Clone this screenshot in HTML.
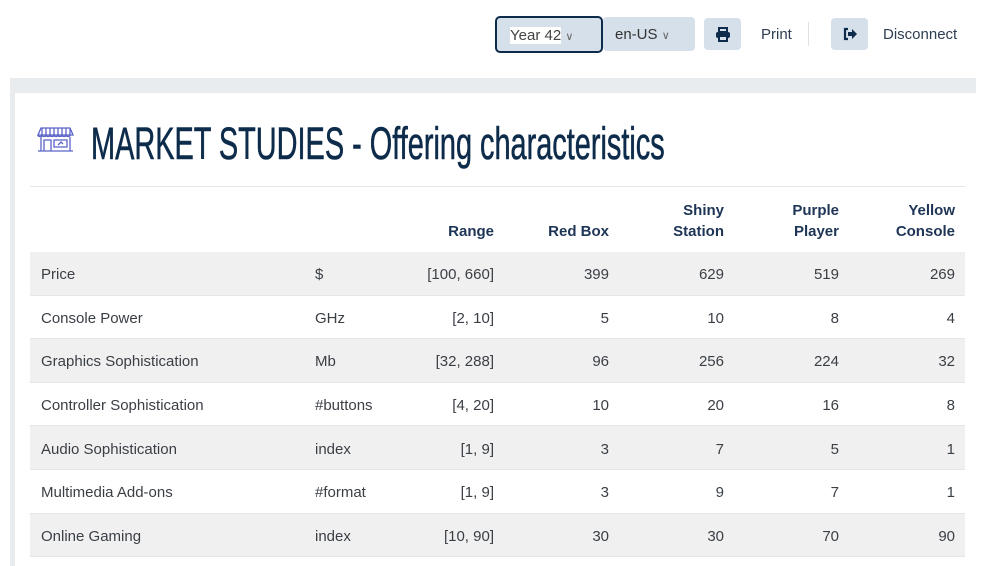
<!DOCTYPE html>
<html><head><meta charset="utf-8"><style>
*{margin:0;padding:0;box-sizing:border-box}
body{width:981px;height:566px;overflow:hidden;background:#fff;font-family:"Liberation Sans",sans-serif;position:relative;color:#3a3f45}
.abs{position:absolute}
.sel{background:#d6e0ea;border-radius:4px;font-size:15px;color:#333;line-height:34px}
.btn{background:#d6e0ea;border-radius:4px;width:37px;height:32px;top:18px;display:flex;align-items:center;justify-content:center}
.lbl{top:26px;font-size:15px;color:#2e3e52}
table{position:absolute;left:30px;top:186px;width:935px;border-collapse:collapse;font-size:15px}
th{color:#1e3556;font-weight:bold;text-align:right;vertical-align:bottom;padding:0 10px 10px 0;height:65px;line-height:21px;border-top:1px solid #e4e6e8}
td{height:43.6px;padding:3px 10px 0 0;text-align:right;color:#3a3f45}
td:first-child{text-align:left;padding-left:11px}
td:nth-child(2){text-align:left}
tr.g td{background:#f0f0f0}
tr td{border-bottom:1px solid #e6e6e6}
</style></head><body>
<div class="abs sel" style="left:603px;top:17px;width:92px;height:34px;padding-left:12px;line-height:36px">en-US <span style="font-size:11px;color:#666">&#8744;</span></div>
<div class="abs sel" style="left:495px;top:16px;width:108px;height:37px;border:2px solid #0d2b4a;border-radius:5px;padding-left:13px;line-height:35px"><span style="background:#fff;color:#444">Year 42</span> <span style="font-size:11px;color:#666">&#8744;</span></div>
<div class="abs btn" style="left:704px"><svg width="16" height="15" viewBox="0 0 16 15"><rect x="4" y="1" width="8" height="4" fill="none" stroke="#0d2b4a" stroke-width="2"/><rect x="1" y="5" width="14" height="6" rx="2" fill="#0d2b4a"/><rect x="4" y="9" width="8" height="5" fill="#d6e0ea" stroke="#0d2b4a" stroke-width="2"/></svg></div>
<div class="abs lbl" style="left:761px">Print</div>
<div class="abs" style="left:808px;top:22px;width:1px;height:24px;background:#dde2e6"></div>
<div class="abs btn" style="left:831px"><svg width="16" height="14" viewBox="0 0 16 14"><path d="M6 2H3v10h3" fill="none" stroke="#0d2b4a" stroke-width="2.2"/><path d="M6 5h4V2l5 5-5 5V9H6z" fill="#0d2b4a"/></svg></div>
<div class="abs lbl" style="left:883px">Disconnect</div>
<div class="abs" style="left:10px;top:78px;width:966px;height:488px;background:#e9ecef"></div>
<div class="abs" style="left:15px;top:93px;width:961px;height:473px;background:#fff"></div>
<svg class="abs" style="left:37px;top:127px" width="37" height="26" viewBox="0 0 37 26" fill="none" stroke="#5a63c8" stroke-width="1.3"><path d="M4 1h29l3 7H1z"/><path d="M5 1v7M9 1v7M13 1v7M17 1v7M21 1v7M25 1v7M29 1v7M33 1v7"/><path d="M1 8c0 2 4 2 4 0 0 2 4 2 4 0 0 2 4 2 4 0 0 2 4 2 4 0 0 2 4 2 4 0 0 2 4 2 4 0 0 2 4 2 4 0 0 2 4 2 4 0"/><path d="M4 10v14M33 10v14M1 24h35M7 24V13h7v11M17 13h13v7H17z"/><path d="M21 18l3-3 2 2"/></svg>
<div class="abs" style="left:91px;top:118px;font-size:45px;color:#0d2b4a;white-space:nowrap;transform:scaleX(0.642);transform-origin:left top;-webkit-text-stroke:0.6px #0d2b4a">MARKET STUDIES - Offering characteristics</div>
<table>
<tr><th style="width:285px"></th><th style="width:89px"></th><th>Range</th><th style="width:115px">Red Box</th><th style="width:115px">Shiny<br>Station</th><th style="width:115px">Purple<br>Player</th><th style="width:116px">Yellow<br>Console</th></tr>
<tr class="g"><td>Price</td><td>$</td><td>[100, 660]</td><td>399</td><td>629</td><td>519</td><td>269</td></tr>
<tr><td>Console Power</td><td>GHz</td><td>[2, 10]</td><td>5</td><td>10</td><td>8</td><td>4</td></tr>
<tr class="g"><td>Graphics Sophistication</td><td>Mb</td><td>[32, 288]</td><td>96</td><td>256</td><td>224</td><td>32</td></tr>
<tr><td>Controller Sophistication</td><td>#buttons</td><td>[4, 20]</td><td>10</td><td>20</td><td>16</td><td>8</td></tr>
<tr class="g"><td>Audio Sophistication</td><td>index</td><td>[1, 9]</td><td>3</td><td>7</td><td>5</td><td>1</td></tr>
<tr><td>Multimedia Add-ons</td><td>#format</td><td>[1, 9]</td><td>3</td><td>9</td><td>7</td><td>1</td></tr>
<tr class="g"><td>Online Gaming</td><td>index</td><td>[10, 90]</td><td>30</td><td>30</td><td>70</td><td>90</td></tr>
</table>
</body></html>
